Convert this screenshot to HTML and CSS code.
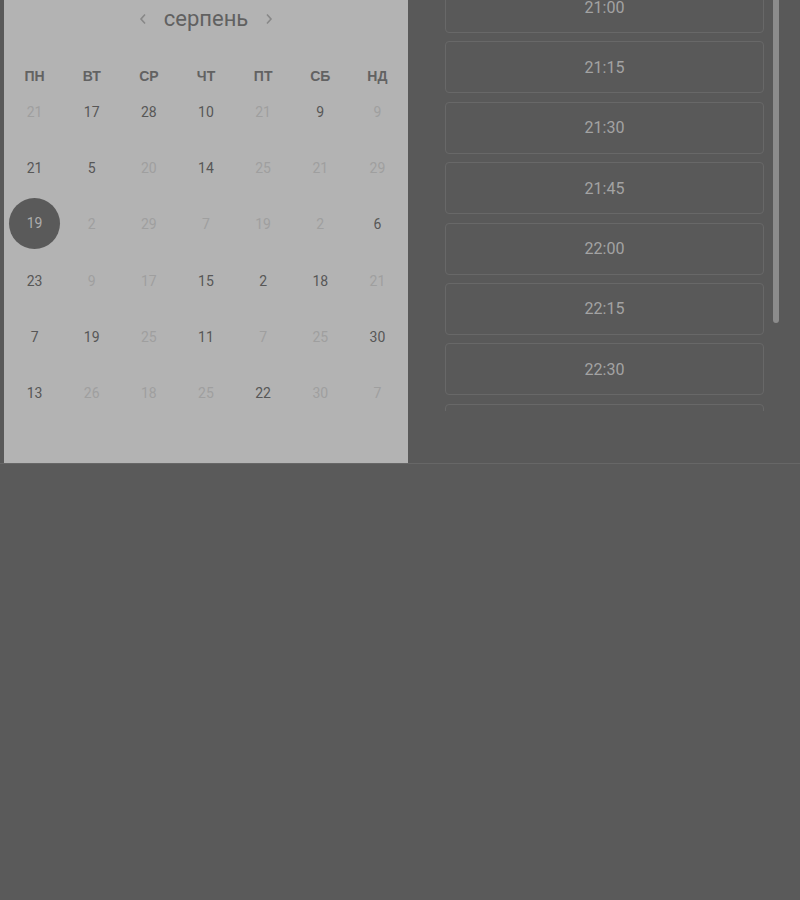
FILE: index.html
```html
<!DOCTYPE html>
<html lang="uk">
<head>
<meta charset="utf-8">
<link rel="stylesheet" href="styles.css">
</head>
<body>
<div class="top">
  <div class="calendar">
    <div class="month">
      <svg class="chev" width="8" height="12" viewBox="0 0 8 12"><path d="M6 1.5 L2 6 L6 10.5" fill="none" stroke="currentColor" stroke-width="1.6"/></svg>
      <span class="month-name">серпень</span>
      <svg class="chev" width="8" height="12" viewBox="0 0 8 12"><path d="M2 1.5 L6 6 L2 10.5" fill="none" stroke="currentColor" stroke-width="1.6"/></svg>
    </div>
    <div class="grid">
      <div class="wd">ПН</div><div class="wd">ВТ</div><div class="wd">СР</div><div class="wd">ЧТ</div><div class="wd">ПТ</div><div class="wd">СБ</div><div class="wd">НД</div>

      <div class="d f">21</div><div class="d">17</div><div class="d">28</div><div class="d">10</div><div class="d f">21</div><div class="d">9</div><div class="d f">9</div>
      <div class="d">21</div><div class="d">5</div><div class="d f">20</div><div class="d">14</div><div class="d f">25</div><div class="d f">21</div><div class="d f">29</div>
      <div class="d"><span class="sel">19</span></div><div class="d f">2</div><div class="d f">29</div><div class="d f">7</div><div class="d f">19</div><div class="d f">2</div><div class="d">6</div>
      <div class="d">23</div><div class="d f">9</div><div class="d f">17</div><div class="d">15</div><div class="d">2</div><div class="d">18</div><div class="d f">21</div>
      <div class="d">7</div><div class="d">19</div><div class="d f">25</div><div class="d">11</div><div class="d f">7</div><div class="d f">25</div><div class="d">30</div>
      <div class="d">13</div><div class="d f">26</div><div class="d f">18</div><div class="d f">25</div><div class="d">22</div><div class="d f">30</div><div class="d f">7</div>
    </div>
  </div>
  <div class="times">
    <div class="viewport">
      <div class="list">
        <div class="slot">21:00</div>
        <div class="slot">21:15</div>
        <div class="slot">21:30</div>
        <div class="slot">21:45</div>
        <div class="slot">22:00</div>
        <div class="slot">22:15</div>
        <div class="slot">22:30</div>
        <div class="slot">22:45</div>
      </div>
    </div>
    <div class="track"><div class="thumb"></div></div>
  </div>
</div>
</body>
</html>
```
FILE: styles.css
```css
html, body {
  margin: 0;
  padding: 0;
  height: 100%;
}
body {
  background: #5a5a5a;
  font-family: Roboto, "Liberation Sans", Arial, sans-serif;
}
.top {
  display: flex;
  height: 463px;
  border-bottom: 1px solid #676767;
  background: #595959;
}
.calendar {
  margin-left: 4px;
  width: 404px;
  background: #b3b3b3;
  padding: 0 2px;
  box-sizing: border-box;
}
.month {
  height: 38px;
  display: flex;
  align-items: center;
  justify-content: center;
  gap: 17px;
  margin-left: 0;
}
.chev {
  color: #888888;
  margin-top: -1px;
}
.month-name {
  font-size: 22px;
  color: #616161;
  line-height: 1;
  margin-top: -1px;
}
.grid {
  display: grid;
  grid-template-columns: repeat(7, 1fr);
  grid-auto-rows: 56.2px;
  grid-template-rows: 48px;
}
.wd {
  display: flex;
  align-items: flex-end;
  justify-content: center;
  font-weight: bold;
  font-size: 14px;
  color: #626262;
  padding-bottom: 2px;
  font-family: "Liberation Sans", Arial, sans-serif;
}
.d {
  display: flex;
  align-items: center;
  justify-content: center;
  font-size: 14px;
  color: #575757;
  margin-top: -2px;
  margin-bottom: 2px;
}
.d.f {
  color: #9f9f9f;
}
.sel {
  width: 51px;
  height: 51px;
  border-radius: 50%;
  background: #5a5a5a;
  color: #adadad;
  display: flex;
  align-items: center;
  justify-content: center;
  margin-top: -2px;
}
.times {
  display: flex;
  padding-left: 37px;
}
.viewport {
  width: 319px;
  height: 411px;
  overflow: hidden;
}
.list {
  margin-top: -19px;
  display: flex;
  flex-direction: column;
  gap: 8.4px;
}
.slot {
  height: 52px;
  box-sizing: border-box;
  border: 1px solid #686868;
  border-radius: 4px;
  display: flex;
  align-items: center;
  justify-content: center;
  font-size: 16px;
  color: #a3a3a3;
}
.track {
  margin-left: 9px;
  width: 6px;
}
.thumb {
  width: 6px;
  height: 323px;
  background: #8c8c8c;
  border-radius: 0 0 3px 3px;
}
```
